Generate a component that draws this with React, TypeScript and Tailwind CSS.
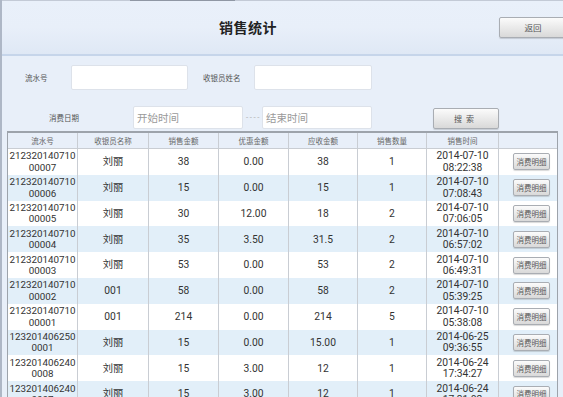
import { type ReactNode } from 'react';

type Sale = {
  serial: [string, string];
  cashier: string;
  amount: string;
  discount: string;
  due: string;
  qty: string;
  time: [string, string];
};

const sales: Sale[] = [
  { serial: ['212320140710', '00007'], cashier: '刘丽', amount: '38', discount: '0.00', due: '38', qty: '1', time: ['2014-07-10', '08:22:38'] },
  { serial: ['212320140710', '00006'], cashier: '刘丽', amount: '15', discount: '0.00', due: '15', qty: '1', time: ['2014-07-10', '07:08:43'] },
  { serial: ['212320140710', '00005'], cashier: '刘丽', amount: '30', discount: '12.00', due: '18', qty: '2', time: ['2014-07-10', '07:06:05'] },
  { serial: ['212320140710', '00004'], cashier: '刘丽', amount: '35', discount: '3.50', due: '31.5', qty: '2', time: ['2014-07-10', '06:57:02'] },
  { serial: ['212320140710', '00003'], cashier: '刘丽', amount: '53', discount: '0.00', due: '53', qty: '2', time: ['2014-07-10', '06:49:31'] },
  { serial: ['212320140710', '00002'], cashier: '001', amount: '58', discount: '0.00', due: '58', qty: '2', time: ['2014-07-10', '05:39:25'] },
  { serial: ['212320140710', '00001'], cashier: '001', amount: '214', discount: '0.00', due: '214', qty: '5', time: ['2014-07-10', '05:38:08'] },
  { serial: ['123201406250', '0001'], cashier: '刘丽', amount: '15', discount: '0.00', due: '15.00', qty: '1', time: ['2014-06-25', '09:36:55'] },
  { serial: ['123201406240', '0008'], cashier: '刘丽', amount: '15', discount: '3.00', due: '12', qty: '1', time: ['2014-06-24', '17:34:27'] },
  { serial: ['123201406240', '0007'], cashier: '刘丽', amount: '15', discount: '3.00', due: '12', qty: '1', time: ['2014-06-24', '17:31:02'] },
];

const headers = ['流水号', '收银员名称', '销售金额', '优惠金额', '应收金额', '销售数量', '销售时间', ''];

const cols = 'grid grid-cols-[70px_71px_70px_70px_69px_69px_72px_60px]';
const cjk = "font-['Noto_Sans_CJK_SC',sans-serif]";
const num = "font-['Roboto','Noto_Sans_CJK_SC',sans-serif]";

const Cell = ({ children, last }: { children?: ReactNode; last?: boolean }) => (
  <div className={`flex flex-col items-center justify-center ${last ? '' : 'border-r border-[#c9cdd3]'}`}>
    {children}
  </div>
);

const GreyButton = ({ children, className }: { children: ReactNode; className: string }) => (
  <button
    className={`${cjk} flex items-center justify-center border border-[#a9adb3] rounded-[2px] bg-gradient-to-b from-[#fbfbfb] to-[#d9d9d9] text-[#555] shadow-[0_1px_1px_rgba(0,0,0,0.15)] ${className}`}
  >
    {children}
  </button>
);

const Field = ({ placeholder, className }: { placeholder?: string; className: string }) => (
  <div
    className={`${cjk} flex items-center bg-white border border-[#dde2ea] rounded-[2px] px-[3px] text-[10.5px] text-[#9a9a9a] ${className}`}
  >
    {placeholder}
  </div>
);

const App = () => {
  return (
    <div className="w-[563px] h-[397px] overflow-hidden bg-[#e8eff9] border-l-2 border-[#aeb7c6] flex flex-col">
      {/* top strip */}
      <div className="h-px bg-[#c3cad6] flex shrink-0">
        <div className="ml-[128px] w-[105px] bg-[#8f97a4]" />
      </div>

      {/* header */}
      <div className="h-[55px] shrink-0 flex items-center border-b-2 border-[#c6d5ea] bg-gradient-to-b from-[#e9f0fa] via-[#e8eff9] to-[#dfe8f5]">
        <h1 className={`${cjk} ml-[217px] text-[14px] font-bold text-[#222] tracking-[0.5px]`}>销售统计</h1>
        <GreyButton className="ml-auto mr-[-4px] w-[68px] h-[21px] text-[8.5px]">返回</GreyButton>
      </div>

      {/* search form */}
      <div className="flex items-center mt-[9px] h-[25px] shrink-0">
        <span className={`${cjk} ml-[23px] w-[46px] text-[7.5px] text-[#555]`}>流水号</span>
        <Field className="w-[117px] h-[25px]" />
        <span className={`${cjk} ml-[15px] w-[51px] text-[7.5px] text-[#555]`}>收银员姓名</span>
        <Field className="w-[118px] h-[25px]" />
      </div>
      <div className="flex items-center mt-[16px] h-[23px] shrink-0">
        <span className={`${cjk} ml-[47px] w-[84px] text-[7.5px] text-[#555]`}>消费日期</span>
        <Field placeholder="开始时间" className="w-[110px] h-[23px]" />
        <span className="w-[19px] text-center text-[7px] tracking-[-0.5px] text-[#b0b0b0] font-['Liberation_Mono',monospace]">----</span>
        <Field placeholder="结束时间" className="w-[110px] h-[23px]" />
        <GreyButton className="ml-[61px] w-[66px] h-[21px] text-[8px] tracking-[4px] mt-[2px]">搜索</GreyButton>
      </div>

      {/* table */}
      <div className="ml-[5px] mt-[2px] w-[551px] border-t-2 border-l border-[#9da3ab] border-r">
        <div className={`${cols} h-[16px] bg-[#e8eff9] border-b border-[#c9cdd3]`}>
          {headers.map((h, i) => (
            <Cell key={i} last={i === headers.length - 1}>
              <span className={`${cjk} text-[7.5px] text-[#666]`}>{h}</span>
            </Cell>
          ))}
        </div>
        {sales.map((s, i) => (
          <div
            key={i}
            className={`${cols} h-[25.8px] ${i % 2 === 0 ? 'bg-white' : 'bg-[#e2eff9]'} ${num} text-[10.3px] text-[#333]`}
          >
            <Cell>
              <span className="text-[9.8px] leading-[11.5px]">{s.serial[0]}</span>
              <span className="text-[9.8px] leading-[11.5px]">{s.serial[1]}</span>
            </Cell>
            <Cell>
              <span>{s.cashier}</span>
            </Cell>
            <Cell>{s.amount}</Cell>
            <Cell>{s.discount}</Cell>
            <Cell>{s.due}</Cell>
            <Cell>{s.qty}</Cell>
            <Cell>
              <span className="leading-[11.5px]">{s.time[0]}</span>
              <span className="leading-[11.5px]">{s.time[1]}</span>
            </Cell>
            <Cell last>
              <GreyButton className="ml-[5px] w-[37px] h-[17px] text-[7.5px]">消费明细</GreyButton>
            </Cell>
          </div>
        ))}
      </div>
    </div>
  );
};

export default App;
